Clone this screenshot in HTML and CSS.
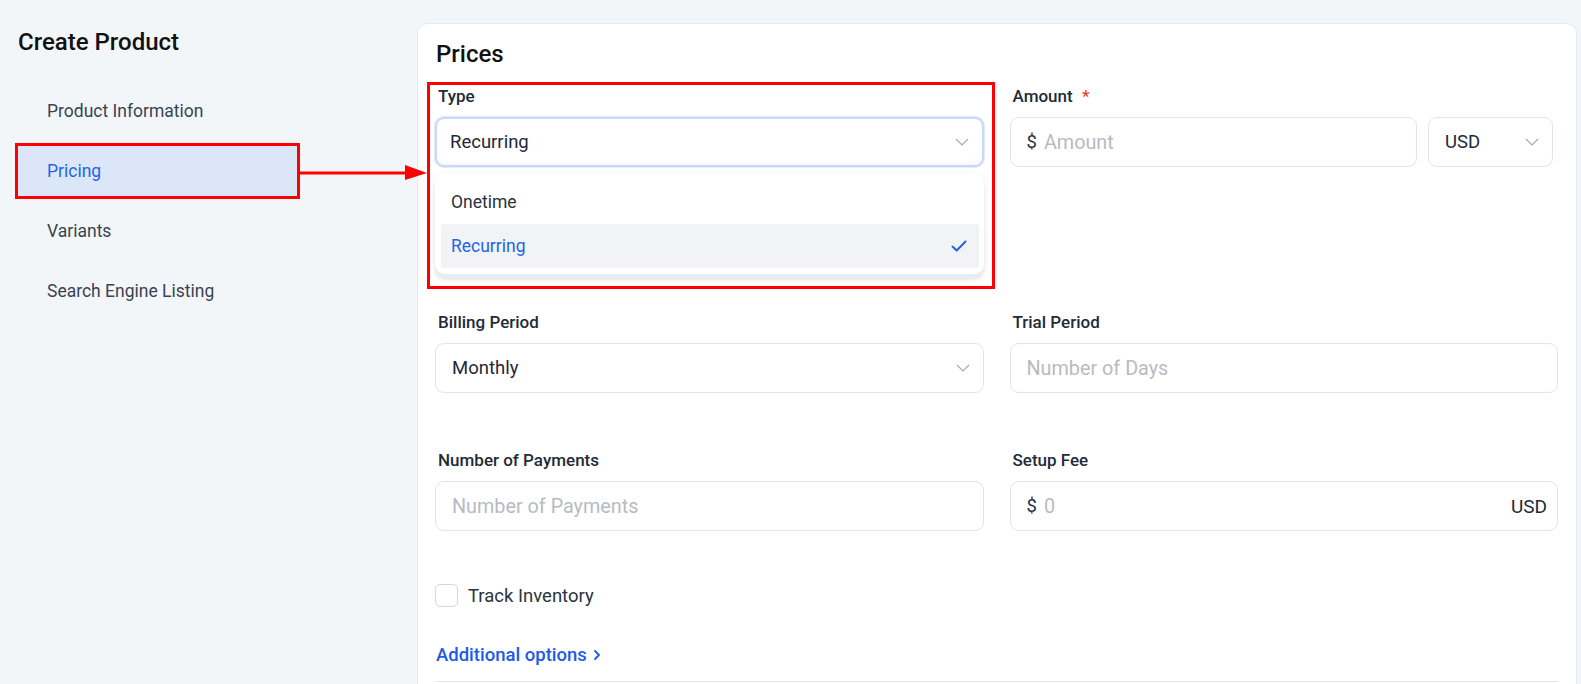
FILE: index.html
```html
<!DOCTYPE html>
<html lang="en">
<head>
<meta charset="utf-8">
<title>Create Product - Pricing</title>
<link rel="stylesheet" href="styles.css">
</head>
<body>
<div class="page">
  <aside class="sidebar">
    <h1 class="sidebar-title">Create Product</h1>
    <nav class="nav">
      <a class="nav-item">Product Information</a>
      <a class="nav-item active">Pricing</a>
      <a class="nav-item">Variants</a>
      <a class="nav-item">Search Engine Listing</a>
    </nav>
  </aside>

  <main class="card">
    <h2 class="card-title">Prices</h2>

    <div class="grid">
      <div class="field row-first">
        <label class="label">Type</label>
        <div class="select-wrap">
          <div class="input select focused">
            <span class="value">Recurring</span>
            <svg class="chev" width="14" height="8" viewBox="0 0 14 8"><path d="M1 1l6 6 6-6" fill="none" stroke="#a3a8b1" stroke-width="1.1"/></svg>
          </div>
          <div class="menu">
            <div class="option">Onetime</div>
            <div class="option selected">
              <span>Recurring</span>
              <svg width="16" height="12" viewBox="0 0 16 12"><path d="M1.5 6.5l4.2 4L14.5 1.5" fill="none" stroke="#2563eb" stroke-width="2" stroke-linecap="round" stroke-linejoin="round"/></svg>
            </div>
          </div>
        </div>
      </div>

      <div class="field row-first">
        <label class="label">Amount <span class="req">*</span></label>
        <div class="amount-row">
          <div class="input amount">
            <span class="prefix">$</span><span class="ph">Amount</span>
          </div>
          <div class="input select currency">
            <span class="value">USD</span>
            <svg class="chev" width="14" height="8" viewBox="0 0 14 8"><path d="M1 1l6 6 6-6" fill="none" stroke="#a3a8b1" stroke-width="1.1"/></svg>
          </div>
        </div>
      </div>

      <div class="field">
        <label class="label">Billing Period</label>
        <div class="input select">
          <span class="value">Monthly</span>
          <svg class="chev" width="14" height="8" viewBox="0 0 14 8"><path d="M1 1l6 6 6-6" fill="none" stroke="#a3a8b1" stroke-width="1.1"/></svg>
        </div>
      </div>

      <div class="field">
        <label class="label">Trial Period</label>
        <div class="input"><span class="ph">Number of Days</span></div>
      </div>

      <div class="field">
        <label class="label">Number of Payments</label>
        <div class="input"><span class="ph">Number of Payments</span></div>
      </div>

      <div class="field">
        <label class="label">Setup Fee</label>
        <div class="input fee">
          <span class="prefix">$</span><span class="ph">0</span>
          <span class="suffix">USD</span>
        </div>
      </div>
    </div>

    <label class="check">
      <span class="box"></span>
      <span>Track Inventory</span>
    </label>

    <a class="more">Additional options
      <svg width="10" height="12" viewBox="0 0 10 12"><path d="M3 2l4 4-4 4" fill="none" stroke="#1d5ae8" stroke-width="1.8" stroke-linecap="round" stroke-linejoin="round"/></svg>
    </a>
    <div class="divider"></div>
  </main>
</div>

<div class="annot annot-nav"></div>
<div class="annot annot-type"></div>
<svg class="annot-arrow" width="132" height="20" viewBox="0 0 132 20">
  <path d="M0 10H110" stroke="#ff0000" stroke-width="3"/>
  <path d="M106 2L128 10L106 17Z" fill="#ff0000"/>
</svg>
</body>
</html>
```

FILE: styles.css
```css
* { box-sizing: border-box; }

html, body {
  margin: 0;
  padding: 0;
}

body {
  background: #f2f6f9;
  font-family: Roboto, "Liberation Sans", Arial, sans-serif;
  color: #1f2937;
  width: 1581px;
  height: 684px;
  overflow: hidden;
  position: relative;
}

.page {
  display: flex;
  height: 684px;
}

/* Sidebar */
.sidebar {
  width: 417px;
  flex: none;
  padding-top: 26px;
}

.sidebar-title {
  margin: 0 0 25px 18px;
  font-size: 24px;
  line-height: 32px;
  font-weight: 500;
  color: #111111;
}

.nav {
  display: flex;
  flex-direction: column;
  gap: 4px;
  padding-left: 15px;
}

.nav-item {
  display: flex;
  align-items: center;
  height: 56px;
  width: 285px;
  padding-left: 32px;
  font-size: 17.5px;
  color: #3b4352;
}

.nav-item.active {
  background: #dbe7f8;
  color: #2563eb;
}

/* Card */
.card {
  flex: 1;
  margin: 23px 4px 0 0;
  background: #ffffff;
  border: 1px solid #e6e9ee;
  border-bottom: none;
  border-radius: 10px 10px 0 0;
  padding: 14px 18px 0 17px;
}

.card-title {
  margin: 0 0 16px 1px;
  font-size: 24px;
  line-height: 32px;
  font-weight: 500;
  color: #111111;
}

.grid {
  display: grid;
  grid-template-columns: 1fr 1fr;
  column-gap: 26px;
}

.field {
  margin-bottom: 57px;
}

.field.row-first {
  margin-bottom: 145px;
}

.label {
  display: block;
  padding-left: 3px;
  margin-bottom: 11px;
  font-size: 17px;
  line-height: 20px;
  font-weight: 500;
  color: #222b38;
}

.req {
  color: #e4412f;
  margin-left: 5px;
}

.input {
  display: flex;
  align-items: center;
  height: 50px;
  padding: 0 16px 0 16px;
  border: 1px solid #e1e4ea;
  border-radius: 9px;
  background: #ffffff;
  font-size: 18.5px;
  color: #1f2937;
}

.select {
  justify-content: space-between;
  padding-right: 13px;
}

.select.focused {
  border: 2px solid #c9d8f6;
  padding-left: 13px;
  box-shadow: 0 0 0 1px #e2eafb, inset 0 -6px 8px -6px rgba(0,0,0,0.06);
}

.ph {
  color: #b7bbc3;
  font-size: 19.8px;
}

.prefix {
  color: #2b3340;
  margin-right: 7px;
}

.fee {
  padding-right: 10px;
}

.suffix {
  margin-left: auto;
  color: #1f2937;
  font-size: 19px;
}

.amount-row {
  display: flex;
  gap: 11px;
  padding-right: 5px;
}

.amount {
  flex: 1;
}

.currency {
  width: 125px;
  flex: none;
}

/* Dropdown */
.select-wrap {
  position: relative;
}

.menu {
  position: absolute;
  left: 0;
  right: 0;
  top: 56px;
  padding: 7px 5px 6px 6px;
  background: #ffffff;
  border-radius: 10px;
  box-shadow: 0 6px 0 -1px #ebecef, 0 7px 4px -1px rgba(0,0,0,0.08), 0 2px 8px rgba(0,0,0,0.08);
  z-index: 2;
}

.option {
  display: flex;
  align-items: center;
  justify-content: space-between;
  height: 44px;
  padding: 0 12px 0 10px;
  font-size: 17.5px;
  color: #2b3340;
  border-radius: 3px;
}

.option.selected {
  background: #f2f3f5;
  color: #2563eb;
}

/* Checkbox & link */
.check {
  display: flex;
  align-items: center;
  gap: 10px;
  margin-top: -4px;
  font-size: 18.5px;
  color: #2b3340;
}

.box {
  width: 23px;
  height: 23px;
  border: 1px solid #d4d8de;
  border-radius: 5px;
  background: #fff;
}

.more {
  display: flex;
  align-items: center;
  gap: 5px;
  margin: 37px 0 0 1px;
  font-size: 18.5px;
  font-weight: 500;
  color: #1d5ae8;
}

.divider {
  margin-top: 15px;
  height: 1px;
  background: #e5e7eb;
}

/* Annotations */
.annot {
  position: absolute;
  border: 3px solid #ff0000;
  pointer-events: none;
}

.annot-nav {
  left: 15px;
  top: 143px;
  width: 285px;
  height: 56px;
}

.annot-type {
  left: 427px;
  top: 82px;
  width: 568px;
  height: 207px;
  z-index: 3;
}

.annot-arrow {
  position: absolute;
  left: 299px;
  top: 163px;
  z-index: 3;
}
```
